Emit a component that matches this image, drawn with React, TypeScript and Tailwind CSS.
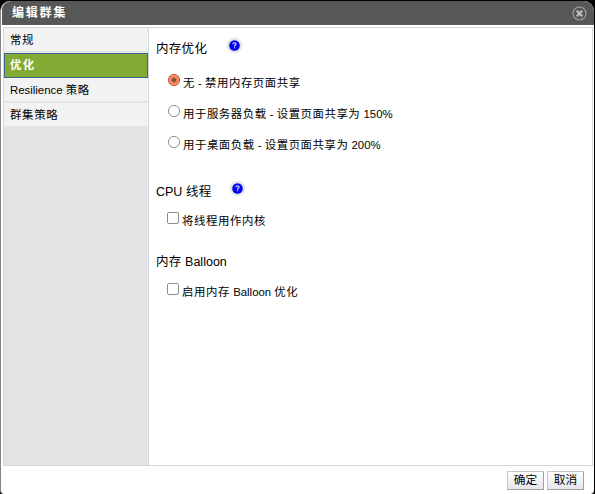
import React from "react";

// Splits a string into CJK and Latin runs so that each gets its own tracking.
function Mixed({ text, cjk }: { text: string; cjk: string }) {
  const runs = text.match(/[\u4e00-\u9fff]+|[^\u4e00-\u9fff]+/g) ?? [];
  return (
    <>
      {runs.map((run, i) => (
        <span key={i} className={/[\u4e00-\u9fff]/.test(run) ? cjk : ""}>
          {run}
        </span>
      ))}
    </>
  );
}

function Help() {
  return (
    <svg width="17" height="17" viewBox="0 0 17 17" className="shrink-0">
      <circle cx="8.5" cy="8.5" r="7.8" fill="#e6e6e6" />
      <circle cx="8.5" cy="8.5" r="5.3" fill="#0000f5" />
      <path d="M6.8 7.2Q6.9 5.9 8.5 5.9T10.1 7.2Q10.1 8 8.6 8.6V9.4M8.6 10.2V11.3" fill="none" stroke="#d8d8ff" strokeWidth="1.2" />
    </svg>
  );
}

function Heading({ text, help }: { text: string; help?: string }) {
  return (
    <div className="flex h-[18px] items-center text-[12.5px] leading-[18px]">
      <h2 className={help ?? ""}>
        <Mixed text={text} cjk="tracking-[0.3px]" />
      </h2>
      {help && <div className="-mt-[7px]"><Help /></div>}
    </div>
  );
}

function Radio({ text, checked }: { text: string; checked?: boolean }) {
  return (
    <label className="flex h-[31px] items-start">
      <svg width="14" height="14" viewBox="0 0 14 14" className="mr-[2px] shrink-0">
        <circle cx="7" cy="7" r="5.6" fill={checked ? "#ee7f58" : "#fff"} stroke={checked ? "#bd5f3d" : "#929292"} />
        {checked && <circle cx="7" cy="7" r="4.5" fill="none" stroke="#f39a78" />}
        {checked && <circle cx="7" cy="7" r="2" fill="#74453a" />}
      </svg>
      <span className="mt-[2px] leading-4">
        <Mixed text={text} cjk="tracking-[0.55px]" />
      </span>
    </label>
  );
}

function Check({ text }: { text: string }) {
  return (
    <label className="flex h-[18px] items-start">
      <span className="mr-[3px] size-3 shrink-0 rounded-[2px] border border-[#8e8e8e] bg-white" />
      <span className="mt-[1px] leading-4">
        <Mixed text={text} cjk="tracking-[0.6px]" />
      </span>
    </label>
  );
}

const items = ["常规", "优化", "Resilience 策略", "群集策略"];

export default function App() {
  return (
    <div className="h-[494px] w-[595px] bg-black pt-px font-['Liberation_Sans','Noto_Sans_CJK_SC',sans-serif] text-[11.4px] font-normal text-black">
      <div className="flex h-[493px] w-[594px] flex-col overflow-hidden rounded-t-[10px] rounded-b-[4px] border-l border-[#858585] bg-white">
        <header className="ml-px flex h-6 w-[592px] shrink-0 items-center justify-between rounded-t-[9px] bg-[#575757] pr-[7px] pl-[10px] text-white">
          <h1 className="text-[12px] leading-6 font-bold tracking-[1.8px]">编辑群集</h1>
          <svg width="15" height="15" viewBox="0 0 15 15" fill="none">
            <circle cx="7.5" cy="7.5" r="6.5" stroke="#a2a2a2" strokeWidth="1.1" />
            <path d="M4.8 4.8 10.2 10.2M10.2 4.8 4.8 10.2" stroke="#c4c4c4" strokeWidth="2" />
          </svg>
        </header>
        <main className="mt-[2px] ml-[2px] flex h-[439px] w-[590px] shrink-0 border border-[#cdd8df]">
          <nav className="w-[145px] shrink-0 border-r border-[#cdd8df] bg-[#e4e4e4]">
            {items.map((item, i) => (
              <div
                key={item}
                className={
                  i === 1
                    ? "flex h-[25px] items-center border border-[#3a668c] bg-[#83aa32] pb-px pl-[5px] font-bold text-white"
                    : "flex h-[25px] items-center border-b-2 border-[#e2e4e5] bg-[#f2f2f2] pl-[6px]"
                }
              >
                <span className="leading-4">
                  <Mixed text={item} cjk={i === 1 ? "tracking-[1.4px]" : "tracking-[0.7px]"} />
                </span>
              </div>
            ))}
          </nav>
          <section className="flex-1 pt-[12px] pl-[7px]">
            <Heading text="内存优化" help="w-[70px]" />
            <div className="pt-[15px] pl-[11px]">
              <Radio text="无 - 禁用内存页面共享" checked />
              <Radio text="用于服务器负载 - 设置页面共享为 150%" />
              <Radio text="用于桌面负载 - 设置页面共享为 200%" />
            </div>
            <div className="pt-[17px]">
              <Heading text="CPU 线程" help="w-[73px]" />
            </div>
            <div className="pt-[11px] pl-[11px]">
              <Check text="将线程用作内核" />
            </div>
            <div className="pt-[23px]">
              <Heading text="内存 Balloon" />
            </div>
            <div className="pt-[12px] pl-[11px]">
              <Check text="启用内存 Balloon 优化" />
            </div>
          </section>
        </main>
        <footer className="flex items-start justify-end gap-[3px] pt-[5px] pr-[10px]">
          {["确定", "取消"].map((name) => (
            <button
              key={name}
              className="flex h-[19px] w-[37px] items-center justify-center rounded-[1px] border border-[#c6c6c6] border-r-[#a0a0a0] border-b-[#a0a0a0] bg-linear-to-b from-white to-[#e6e6ea] pb-px text-[11.7px] leading-4"
            >
              {name}
            </button>
          ))}
        </footer>
      </div>
    </div>
  );
}
